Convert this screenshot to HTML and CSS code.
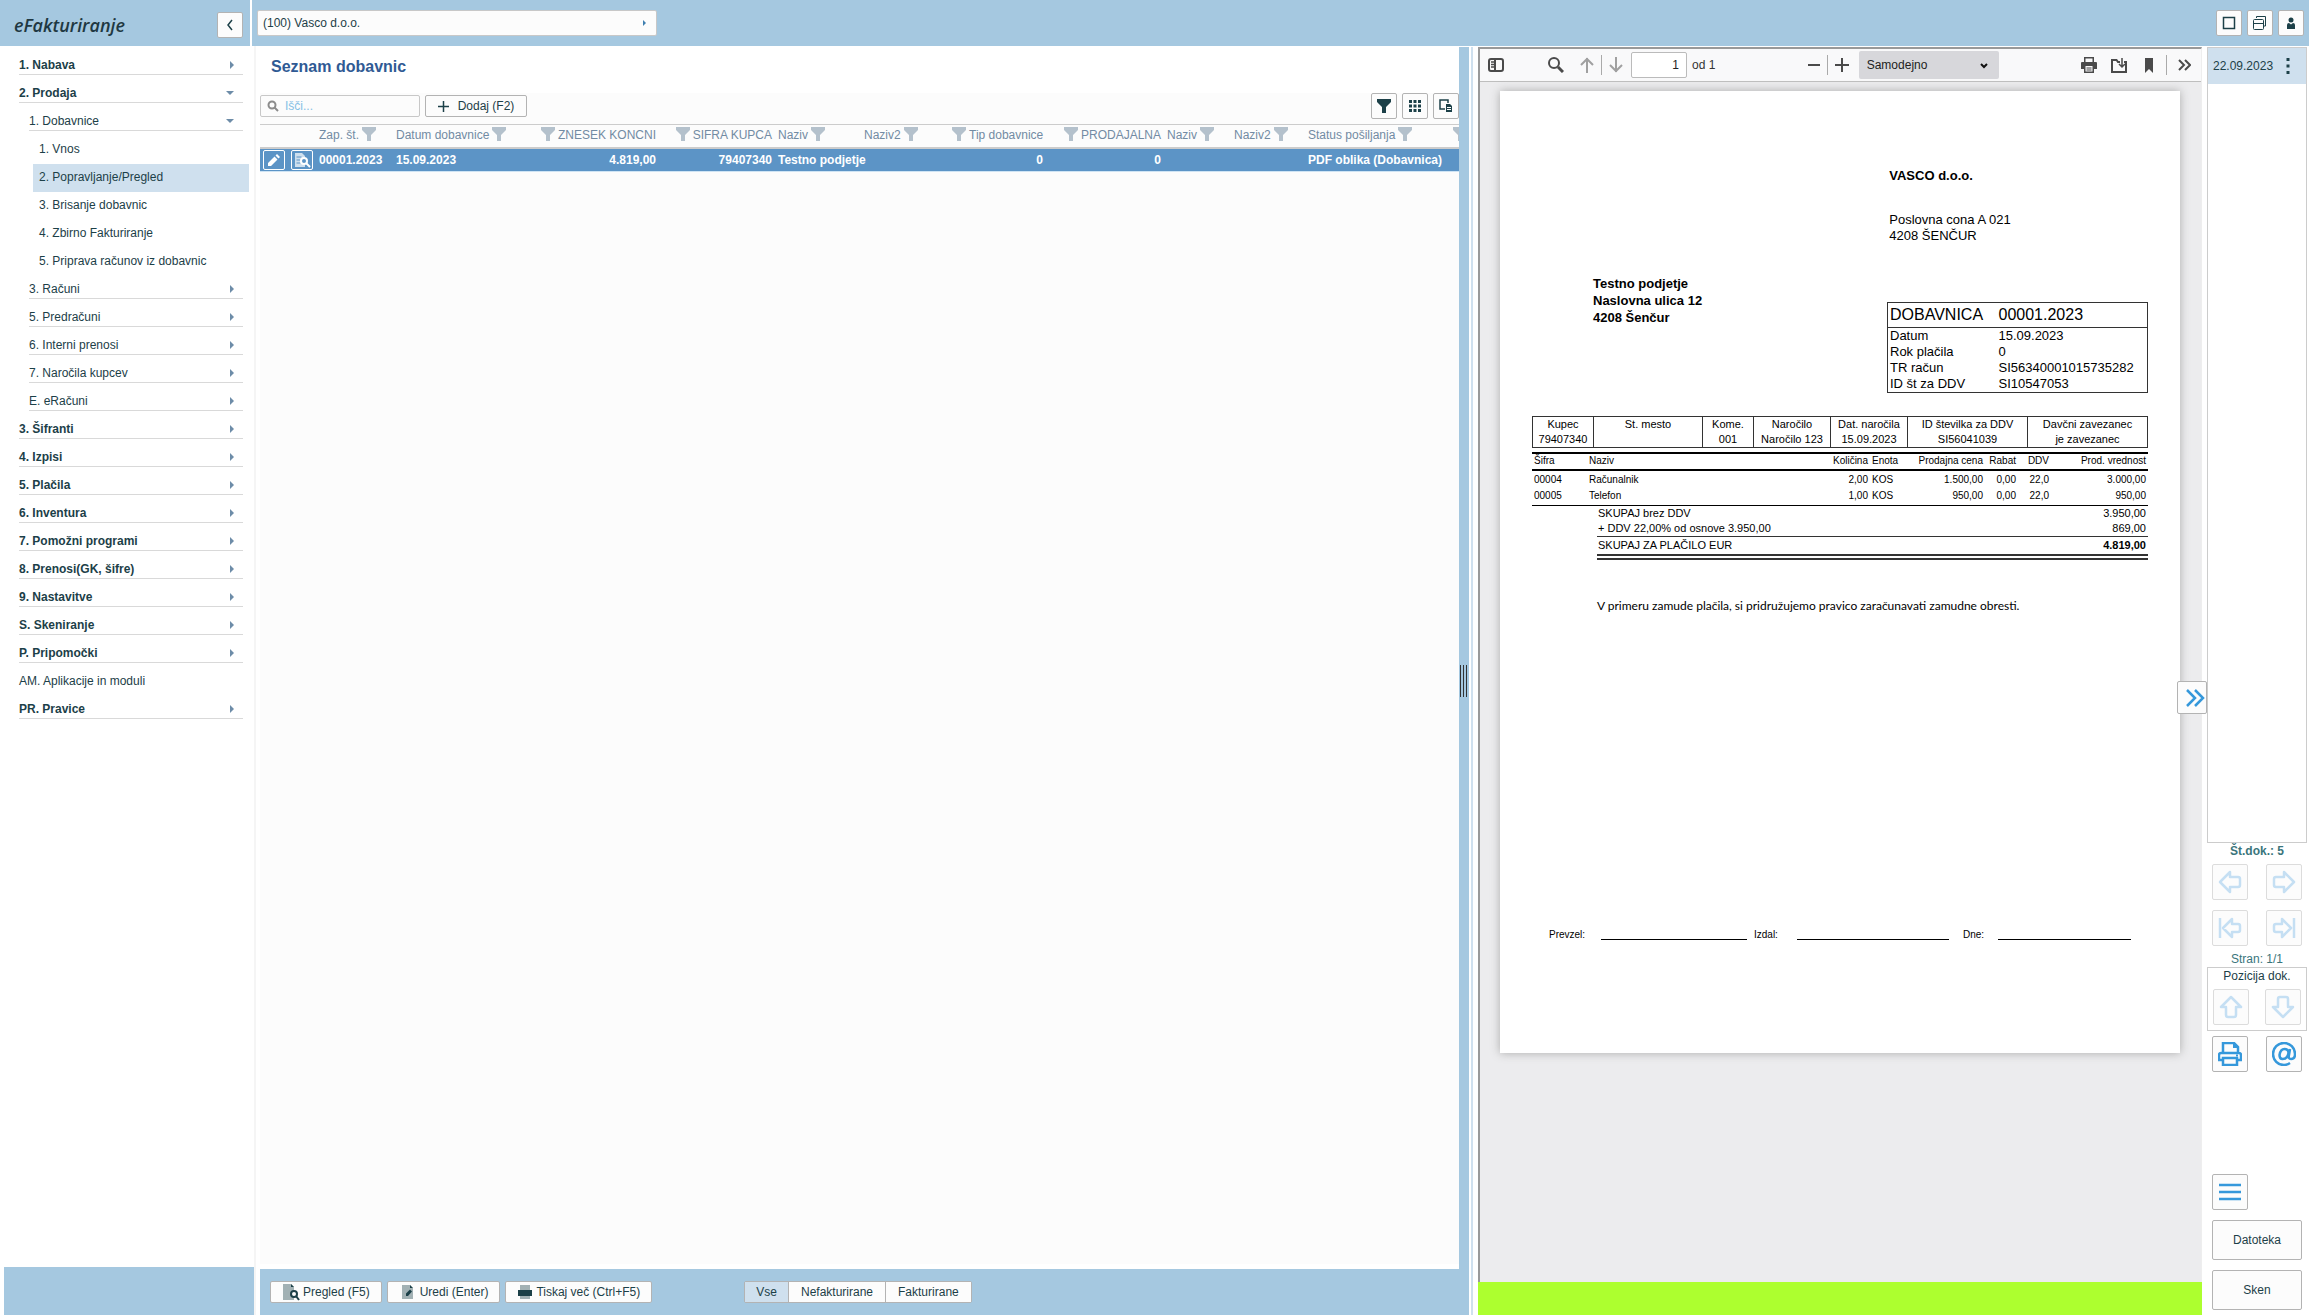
FILE: index.html
```html
<!DOCTYPE html>
<html lang="sl">
<head>
<meta charset="utf-8">
<title>eFakturiranje</title>
<link rel="stylesheet" href="styles.css">
</head>
<body>
<svg class="defs" aria-hidden="true">
  <symbol id="funnel" viewBox="0 0 14 14"><path d="M0 0h14v3L9 8v6H5V8L0 3z"/></symbol>
  <symbol id="tri" viewBox="0 0 4 8"><path d="M0 0l4 4-4 4z"/></symbol>
  <symbol id="tri-down" viewBox="0 0 8 4"><path d="M0 0h8l-4 4z"/></symbol>
  <symbol id="docsearch" viewBox="0 0 18 18"><path d="M1 1h8l3 3v13H1z" opacity=".4"/><path d="M9 1l3 3H9z"/><circle cx="12" cy="11" r="3" fill="#fcfcfc" stroke="currentColor" stroke-width="2"/><path d="M14 13l3 4" stroke="currentColor" stroke-width="2"/></symbol>
  <symbol id="arrow" viewBox="0 0 24 24"><path d="M2 12L12 2v5h8q2 0 2 2v6q0 2-2 2h-8v5z" fill="none" stroke="currentColor" stroke-width="2.500" stroke-linejoin="round"/></symbol>
  <symbol id="arrow-end" viewBox="0 0 24 24"><path d="M2 2v20M5 12l9-9v5h6q2 0 2 2v4q0 2-2 2h-6v5z" fill="none" stroke="currentColor" stroke-width="2.500" stroke-linejoin="round"/></symbol>
</svg>

<header class="top">
  <div class="brand">
    <h1>eFakturiranje</h1>
    <button class="btn sq" aria-label="Skrij meni"><svg width="8" height="12" viewBox="0 0 8 12"><path d="M6 1L2 6l4 5" class="line15"/></svg></button>
  </div>
  <div class="topbar">
    <div class="company">
      <select aria-label="Podjetje"><option>(100) Vasco d.o.o.</option></select>
      <svg class="tri" width="3" height="6"><use href="#tri"/></svg>
    </div>
    <div class="topicons">
      <button class="btn sq" aria-label="Okno"><svg width="14" height="14" viewBox="0 0 14 14"><rect x="1.500" y="1.500" width="11" height="11" class="line15"/></svg></button>
      <button class="btn sq" aria-label="Okna"><svg width="16" height="16" viewBox="0 0 16 16"><path d="M4.500 3V1.500h9V11H12M1.500 5.500q0-1 1-1h8q1 0 1 1v8q0 1-1 1h-8q-1 0-1-1zM1.500 8.500h10" class="thin"/></svg></button>
      <button class="btn sq" aria-label="Uporabnik"><svg width="10" height="12" viewBox="0 0 10 12"><circle cx="5" cy="3" r="2.500"/><path d="M1 12V8q0-2 2-2l2 1.500L7 6q2 0 2 2v4z"/></svg></button>
    </div>
  </div>
</header>

<div class="app">
  <aside class="side">
    <nav>
      <a href="#" class="l1"><span>1. Nabava</span><svg class="tri" width="4" height="8"><use href="#tri"/></svg></a>
      <a href="#" class="l1"><span>2. Prodaja</span><svg class="tri" width="8" height="4"><use href="#tri-down"/></svg></a>
      <a href="#" class="l2"><span>1. Dobavnice</span><svg class="tri" width="8" height="4"><use href="#tri-down"/></svg></a>
      <a href="#" class="l3"><span>1. Vnos</span></a>
      <a href="#" class="l3 on"><span>2. Popravljanje/Pregled</span></a>
      <a href="#" class="l3"><span>3. Brisanje dobavnic</span></a>
      <a href="#" class="l3"><span>4. Zbirno Fakturiranje</span></a>
      <a href="#" class="l3"><span>5. Priprava računov iz dobavnic</span></a>
      <a href="#" class="l2"><span>3. Računi</span><svg class="tri" width="4" height="8"><use href="#tri"/></svg></a>
      <a href="#" class="l2"><span>5. Predračuni</span><svg class="tri" width="4" height="8"><use href="#tri"/></svg></a>
      <a href="#" class="l2"><span>6. Interni prenosi</span><svg class="tri" width="4" height="8"><use href="#tri"/></svg></a>
      <a href="#" class="l2"><span>7. Naročila kupcev</span><svg class="tri" width="4" height="8"><use href="#tri"/></svg></a>
      <a href="#" class="l2"><span>E. eRačuni</span><svg class="tri" width="4" height="8"><use href="#tri"/></svg></a>
      <a href="#" class="l1"><span>3. Šifranti</span><svg class="tri" width="4" height="8"><use href="#tri"/></svg></a>
      <a href="#" class="l1"><span>4. Izpisi</span><svg class="tri" width="4" height="8"><use href="#tri"/></svg></a>
      <a href="#" class="l1"><span>5. Plačila</span><svg class="tri" width="4" height="8"><use href="#tri"/></svg></a>
      <a href="#" class="l1"><span>6. Inventura</span><svg class="tri" width="4" height="8"><use href="#tri"/></svg></a>
      <a href="#" class="l1"><span>7. Pomožni programi</span><svg class="tri" width="4" height="8"><use href="#tri"/></svg></a>
      <a href="#" class="l1"><span>8. Prenosi(GK, šifre)</span><svg class="tri" width="4" height="8"><use href="#tri"/></svg></a>
      <a href="#" class="l1"><span>9. Nastavitve</span><svg class="tri" width="4" height="8"><use href="#tri"/></svg></a>
      <a href="#" class="l1"><span>S. Skeniranje</span><svg class="tri" width="4" height="8"><use href="#tri"/></svg></a>
      <a href="#" class="l1"><span>P. Pripomočki</span><svg class="tri" width="4" height="8"><use href="#tri"/></svg></a>
      <a href="#" class="l1 plain"><span>AM. Aplikacije in moduli</span></a>
      <a href="#" class="l1"><span>PR. Pravice</span><svg class="tri" width="4" height="8"><use href="#tri"/></svg></a>
    </nav>
    <div class="sidefoot"></div>
  </aside>

  <main class="list">
    <h2>Seznam dobavnic</h2>
    <div class="grid">
      <div class="tools">
        <label class="search"><svg width="12" height="12" viewBox="0 0 12 12"><circle cx="5" cy="5" r="3.500"/><path d="M7.500 7.500L11 11"/></svg><input type="text" placeholder="Išči..." aria-label="Išči"></label>
        <button class="btn add"><svg width="11" height="11" viewBox="0 0 11 11"><path d="M5.500 0v11M0 5.500h11" class="line15"/></svg>Dodaj (F2)</button>
        <div class="toolicons">
          <button class="btn sq" aria-label="Filter"><svg width="14" height="14"><use href="#funnel"/></svg></button>
          <button class="btn sq" aria-label="Stolpci"><svg width="12" height="12" viewBox="0 0 12 12"><path d="M0 0h3v3H0zM4.500 0h3v3h-3zM9 0h3v3H9zM0 4.500h3v3H0zM4.500 4.500h3v3h-3zM9 4.500h3v3H9zM0 9h3v3H0zM4.500 9h3v3h-3zM9 9h3v3H9z"/></svg></button>
          <button class="btn sq" aria-label="Izvoz"><svg width="14" height="14" viewBox="0 0 14 14"><path d="M6 10H1V1h8v3" class="line15"/><path d="M7 5h4l2 2v6H7z"/><path d="M8 8.500h4M8 10.500h4" stroke="#fff"/></svg></button>
        </div>
      </div>
      <table class="data">
        <colgroup><col class="w56"><col class="w77"><col class="w144"><col class="w122"><col class="w116"><col class="w86"><col class="w88"><col class="w97"><col class="w118"><col class="w67"><col class="w74"><col class="w148"><col></colgroup>
        <thead><tr>
          <th></th>
          <th>Zap. št.<svg class="f"><use href="#funnel"/></svg></th>
          <th>Datum dobavnice<svg class="f"><use href="#funnel"/></svg></th>
          <th class="num"><svg class="f"><use href="#funnel"/></svg>ZNESEK KONCNI</th>
          <th class="num"><svg class="f"><use href="#funnel"/></svg>SIFRA KUPCA</th>
          <th>Naziv<svg class="f"><use href="#funnel"/></svg></th>
          <th>Naziv2<svg class="f"><use href="#funnel"/></svg></th>
          <th class="num"><svg class="f"><use href="#funnel"/></svg>Tip dobavnice</th>
          <th class="num"><svg class="f"><use href="#funnel"/></svg>PRODAJALNA</th>
          <th>Naziv<svg class="f"><use href="#funnel"/></svg></th>
          <th>Naziv2<svg class="f"><use href="#funnel"/></svg></th>
          <th>Status pošiljanja<svg class="f"><use href="#funnel"/></svg></th>
          <th class="last"><svg class="f"><use href="#funnel"/></svg></th>
        </tr></thead>
        <tbody><tr>
          <td><div class="rowbtns"><button aria-label="Uredi"><svg width="12" height="12" viewBox="0 0 12 12"><path d="M0 12V9l6.500-6.500 3 3L3 12zM7.500 1.500L9 0l3 3-1.500 1.500z"/></svg></button><button aria-label="Pregled"><svg width="18" height="18" viewBox="0 0 18 18"><path d="M2 2h7l3 3v11H2z" opacity=".7"/><path d="M3.500 6h5M3.500 9h4M3.500 12h4" stroke="#5c94c6"/><circle cx="11" cy="10" r="3" fill="#5c94c6" stroke="#fff" stroke-width="2"/><path d="M13 12l4 4" stroke="#fff" stroke-width="2"/></svg></button></div></td>
          <td>00001.2023</td><td>15.09.2023</td><td class="num">4.819,00</td><td class="num">79407340</td><td>Testno podjetje</td><td></td><td class="num">0</td><td class="num">0</td><td></td><td></td><td>PDF oblika (Dobavnica)</td><td></td>
        </tr></tbody>
      </table>
    </div>
    <footer class="actions">
      <button class="btn"><svg width="18" height="18"><use href="#docsearch"/></svg>Pregled (F5)</button>
      <button class="btn"><svg width="18" height="16" viewBox="0 0 18 16"><path d="M3 1h8l3 3v11H3z" opacity=".4"/><path d="M11 1l3 3h-3zM7 12V9.500l4-4 2 2-4 4.500z"/></svg>Uredi (Enter)</button>
      <button class="btn"><svg width="16" height="16" viewBox="0 0 16 16"><path d="M3 1h10v14H3z" opacity=".4"/><path d="M1 6h14v6H1z"/></svg>Tiskaj več (Ctrl+F5)</button>
      <div class="seg"><button class="on">Vse</button><button>Nefakturirane</button><button>Fakturirane</button></div>
    </footer>
  </main>

  <div class="split"><span class="grip"></span></div>

  <section class="pdf">
    <div class="viewer">
      <div class="pdfbar">
        <div class="grp g1">
          <button aria-label="Stranska vrstica"><svg width="16" height="14" viewBox="0 0 16 14"><rect x="1" y="1" width="14" height="12" rx="2" class="line2"/><path d="M7 1v12" class="line2"/><path d="M3 4h3M3 6.500h3M3 9h3" class="line15"/></svg></button>
          <button class="find" aria-label="Najdi"><svg width="16" height="16" viewBox="0 0 16 16"><circle cx="6" cy="6" r="5" class="line2"/><path d="M10 10l5 5" stroke="currentColor" stroke-width="3"/></svg></button>
          <button class="dim" aria-label="Prejšnja stran"><svg width="14" height="16" viewBox="0 0 14 16"><path d="M7 16V1M1 8l6-6 6 6" class="line2"/></svg></button>
          <i class="sep"></i>
          <button class="dim" aria-label="Naslednja stran"><svg width="14" height="16" viewBox="0 0 14 16"><path d="M7 0v15M1 8l6 6 6-6" class="line2"/></svg></button>
          <input class="pageno" type="text" value="1" aria-label="Stran"><span class="pages">od 1</span>
        </div>
        <div class="grp g2">
          <button aria-label="Pomanjšaj"><svg width="12" height="14" viewBox="0 0 12 14"><path d="M0 7h12" class="line2"/></svg></button>
          <i class="sep"></i>
          <button aria-label="Povečaj"><svg width="14" height="14" viewBox="0 0 14 14"><path d="M7 0v14M0 7h14" class="line2"/></svg></button>
          <div class="zoom"><select aria-label="Povečava"><option>Samodejno</option></select><svg width="8" height="6" viewBox="0 0 8 6"><path d="M1 1l3 3 3-3" class="line2"/></svg></div>
        </div>
        <div class="grp g3">
          <button aria-label="Natisni"><svg width="16" height="16" viewBox="0 0 16 16"><path d="M3 0h10v5h2q1 0 1 1v6h-3v4H3v-4H0V6q0-1 1-1h2zM4.500 1.500V5h7V1.500zM4.500 9v5.500h7V9zM5.500 10.500h5v1h-5zM5.500 12.500h5v1h-5z" fill-rule="evenodd"/></svg></button>
          <button aria-label="Prenesi"><svg width="16" height="15" viewBox="0 0 16 15"><path d="M9 4H7L5.500 2H1v12h14V4h-2" class="line2"/><path d="M11 0v9M8 6l3 3 3-3" class="line15"/></svg></button>
          <button aria-label="Zaznamek"><svg width="8" height="15" viewBox="0 0 8 15"><path d="M0 0h8v15L4 11l-4 4z"/></svg></button>
          <i class="sep"></i>
          <button aria-label="Orodja"><svg width="13" height="12" viewBox="0 0 13 12"><path d="M1 1l5 5-5 5M7 1l5 5-5 5" class="line2"/></svg></button>
        </div>
      </div>
      <div class="canvas">
        <article class="page">
          <div class="sender"><b>VASCO d.o.o.</b><p>Poslovna cona A 021<br>4208 ŠENČUR</p></div>
          <div class="mid">
            <address>Testno podjetje<br>Naslovna ulica 12<br>4208 Šenčur</address>
            <table class="docbox">
              <tr class="head"><td>DOBAVNICA</td><td>00001.2023</td></tr>
              <tr><td>Datum</td><td>15.09.2023</td></tr>
              <tr><td>Rok plačila</td><td>0</td></tr>
              <tr><td>TR račun</td><td>SI56340001015735282</td></tr>
              <tr><td>ID št za DDV</td><td>SI10547053</td></tr>
            </table>
          </div>
          <table class="buyer">
            <colgroup><col class="w61"><col><col class="w51"><col class="w77"><col class="w77"><col class="w120"><col class="w120"></colgroup>
            <tr><td>Kupec</td><td>St. mesto</td><td>Kome.</td><td>Naročilo</td><td>Dat. naročila</td><td>ID številka za DDV</td><td>Davčni zavezanec</td></tr>
            <tr><td>79407340</td><td></td><td>001</td><td>Naročilo 123</td><td>15.09.2023</td><td>SI56041039</td><td>je zavezanec</td></tr>
          </table>
          <table class="items">
            <colgroup><col class="w55"><col><col class="w61"><col class="w41"><col class="w74"><col class="w33"><col class="w33"><col class="w97"></colgroup>
            <thead><tr><th>Šifra</th><th>Naziv</th><th class="r">Količina</th><th>Enota</th><th class="r">Prodajna cena</th><th class="r">Rabat</th><th class="r">DDV</th><th class="r">Prod. vrednost</th></tr></thead>
            <tbody>
              <tr><td>00004</td><td>Računalnik</td><td class="r">2,00</td><td>KOS</td><td class="r">1.500,00</td><td class="r">0,00</td><td class="r">22,0</td><td class="r">3.000,00</td></tr>
              <tr><td>00005</td><td>Telefon</td><td class="r">1,00</td><td>KOS</td><td class="r">950,00</td><td class="r">0,00</td><td class="r">22,0</td><td class="r">950,00</td></tr>
            </tbody>
          </table>
          <dl class="totals">
            <div><dt>SKUPAJ brez DDV</dt><dd>3.950,00</dd></div>
            <div><dt>+ DDV 22,00% od osnove 3.950,00</dt><dd>869,00</dd></div>
            <div class="sum"><dt>SKUPAJ ZA PLAČILO EUR</dt><dd>4.819,00</dd></div>
          </dl>
          <p class="note">V primeru zamude plačila, si pridružujemo pravico zaračunavati zamudne obresti.</p>
          <div class="sign"><span>Prevzel:</span><i></i><span>Izdal:</span><i></i><span>Dne:</span><i></i></div>
        </article>
      </div>
    </div>
    <div class="status"></div>
    <button class="btn expand" aria-label="Razširi"><svg width="20" height="20" viewBox="0 0 20 20"><path d="M2 2l8 8-8 8M10 2l8 8-8 8" class="line25"/></svg></button>
  </section>

  <aside class="docs">
    <div class="doclist">
      <div class="docitem"><span>22.09.2023</span><button aria-label="Več"><svg width="4" height="16" viewBox="0 0 4 16"><path d="M.500 0h3v3h-3zM.500 6.500h3v3h-3zM.500 13h3v3h-3z"/></svg></button></div>
    </div>
    <div class="count">Št.dok.: 5</div>
    <div class="pair">
      <button class="btn big off" aria-label="Prejšnji"><svg width="24" height="24"><use href="#arrow"/></svg></button>
      <button class="btn big off flip" aria-label="Naslednji"><svg width="24" height="24"><use href="#arrow"/></svg></button>
      <button class="btn big off" aria-label="Prvi"><svg width="24" height="24"><use href="#arrow-end"/></svg></button>
      <button class="btn big off flip" aria-label="Zadnji"><svg width="24" height="24"><use href="#arrow-end"/></svg></button>
    </div>
    <div class="pageinfo">Stran: 1/1</div>
    <fieldset class="pos"><div>Pozicija dok.</div>
      <div class="posbtns">
        <button class="btn big off up" aria-label="Gor"><svg width="24" height="24"><use href="#arrow"/></svg></button>
        <button class="btn big off down" aria-label="Dol"><svg width="24" height="24"><use href="#arrow"/></svg></button>
      </div>
    </fieldset>
    <div class="pair send">
      <button class="btn big" aria-label="Natisni"><svg width="24" height="24" viewBox="0 0 24 24"><path d="M5 10V1h11l4 4v5M5 18H1v-5q0-2 2-2h18q2 0 2 2v5h-4M5 16h14v7H5z" class="line25"/><path d="M15 1v5h5M18 12.500h2v2h-2z"/></svg></button>
      <button class="btn big" aria-label="E-pošta"><svg width="24" height="24" viewBox="0 0 24 24"><path d="M18 21q-3 2-6 2A11 11 0 1 1 23 12q0 5-4 5-3 0-2-4l1-6M16.500 11q0-4-4-4t-5 6q0 4 3 4 5 0 6-6z" class="line25"/></svg></button>
    </div>
    <button class="btn big menu" aria-label="Meni"><svg width="22" height="18" viewBox="0 0 22 18"><path d="M0 2h22M0 9h22M0 16h22" class="line25"/></svg></button>
    <button class="btn wide">Datoteka</button>
    <button class="btn wide">Sken</button>
  </aside>
</div>
</body>
</html>
```
FILE: styles.css
```css
* { box-sizing: border-box; }
body {
  margin: 0;
  min-height: 100vh;
  display: flex;
  flex-direction: column;
  font: 12px/14px "Liberation Sans", Arial, sans-serif;
  color: #1c4048;
  background: #fff;
}
button, input, select { font: inherit; color: inherit; margin: 0; }
button { padding: 0; border: 0; background: none; }
svg { display: block; fill: currentColor; flex: none; }
h1, h2, p, dl, dd { margin: 0; }
table { border-collapse: collapse; }
th { font-weight: normal; text-align: left; }
td, th { padding: 0; }
.defs { position: absolute; width: 0; height: 0; }
.thin { fill: none; stroke: currentColor; stroke-width: 1; }
.line15 { fill: none; stroke: currentColor; stroke-width: 1.5; }
.line2 { fill: none; stroke: currentColor; stroke-width: 2; }
.line25 { fill: none; stroke: currentColor; stroke-width: 2.5; }
.tri { color: #6d8ca8; }
.btn {
  display: flex;
  align-items: center;
  justify-content: center;
  background: #fcfcfc;
  border: 1px solid #b3b3b3;
  border-radius: 2px;
}
.sq { width: 26px; height: 26px; }

.top { display: flex; gap: 2px; height: 46px; }
.brand {
  width: 250px;
  display: flex;
  align-items: center;
  justify-content: space-between;
  padding: 4px 7px 0 14px;
  background: #a5c8e0;
}
.brand h1 { font: italic 600 18px/24px "Open Sans", sans-serif; color: #1f3842; }
.topbar {
  flex: 1;
  display: flex;
  justify-content: space-between;
  padding: 10px 5px 0;
  background: #a5c8e0;
}
.company { position: relative; width: 400px; height: 26px; }
.company select {
  appearance: none;
  width: 100%;
  height: 26px;
  padding: 0 5px;
  background: #fcfcfc;
  border: 1px solid #c8c8c8;
  border-radius: 2px;
}
.company .tri { position: absolute; right: 11px; top: 10px; color: #3f7fb0; }
.topicons { display: flex; gap: 5px; }

.app {
  flex: 1;
  display: grid;
  grid-template-columns: 260px minmax(0, 1199fr) 19px minmax(0, 724fr) 107px;
}

.side { display: flex; flex-direction: column; margin-right: 4px; border-right: 2px solid #f5f5f5; }
.side nav { flex: 1; padding-top: 6px; }
.side a {
  display: flex;
  align-items: center;
  justify-content: space-between;
  height: 23px;
  margin: 0 11px 5px 29px;
  padding: 4px 9px 0 0;
  border-bottom: 1px solid #d9d9d9;
  color: inherit;
  text-decoration: none;
}
.side a.l1 { margin-left: 19px; font-weight: bold; }
.side a.plain { font-weight: normal; border-color: transparent; }
.side a.l3 { height: 28px; margin: 0 5px 0 33px; padding: 0 6px 2px; border: 0; }
.side a.on { background: #cfe0ee; }
.sidefoot { height: 48px; margin-left: 4px; background: #a5c8e0; }

.list { display: flex; flex-direction: column; }
.list h2 { height: 47px; padding: 11px 11px 0; font-size: 16px; line-height: 20px; color: #2f5a94; }
.grid { flex: 1; background: #fcfcfc; margin-bottom: 5px; overflow: hidden; }
.tools { display: flex; align-items: center; height: 31px; padding-bottom: 5px; }
.search { display: flex; align-items: center; gap: 6px; width: 160px; height: 22px; padding: 0 6px; border: 1px solid #c8c8c8; border-radius: 2px; }
.search svg { fill: none; stroke: #8c8c8c; stroke-width: 2; }
.search input { width: 120px; height: 18px; padding: 0; border: 0; background: none; outline: 0; }
.search input::placeholder { color: #85c1e6; opacity: 1; }
.add { gap: 9px; width: 102px; height: 22px; margin-left: 5px; }
.toolicons { display: flex; gap: 5px; margin-left: auto; }

.data { width: 100%; table-layout: fixed; }
.data th { height: 23px; padding: 0 3px 2px; border-top: 1px solid #ccc; border-bottom: 2px solid #ccc; color: #728ba3; white-space: nowrap; line-height: 16px; }
.data td { height: 24px; padding: 0 3px; font-weight: bold; white-space: nowrap; color: #fff; }
.data tbody tr { background: #5c94c6; border-bottom: 1px solid #cfe4f4; }
.data .num { text-align: right; }
.data .last { padding-left: 0; overflow: hidden; }
.f { display: inline-block; width: 14px; height: 14px; margin-left: 3px; vertical-align: -2px; color: #b4c1cc; }
.num .f, .last .f { margin: 0 3px 0 0; }
.rowbtns { display: flex; gap: 6px; }
.rowbtns button { display: flex; align-items: center; justify-content: center; width: 22px; height: 20px; border: 1px solid #fff; border-radius: 2px; }
.w33 { width: 33px; }
.w41 { width: 41px; }
.w51 { width: 51px; }
.w55 { width: 55px; }
.w56 { width: 56px; }
.w61 { width: 61px; }
.w67 { width: 67px; }
.w74 { width: 74px; }
.w77 { width: 77px; }
.w86 { width: 86px; }
.w88 { width: 88px; }
.w97 { width: 97px; }
.w116 { width: 116px; }
.w118 { width: 118px; }
.w120 { width: 120px; }
.w122 { width: 122px; }
.w144 { width: 144px; }
.w148 { width: 148px; }

.actions { display: flex; align-items: center; gap: 5px; height: 46px; padding: 0 10px; background: #a5c8e0; }
.actions .btn { gap: 3px; height: 22px; padding: 0 11px; }
.seg { display: flex; margin-left: 87px; border: 1px solid #b3b3b3; border-radius: 2px; }
.seg button { height: 20px; padding: 0 12px; background: #fcfcfc; border-left: 1px solid #b3b3b3; }
.seg button:first-child { padding: 0 11px; border-left: 0; }
.seg .on { background: #cfe0ee; }

.split { display: flex; align-items: center; margin: 1px 5px 0 0; padding-left: 1px; background: linear-gradient(90deg, #a5c8e0 10px, #fff 10px, #fff 12px, #cfe0ee 12px); }
.grip { width: 7px; height: 32px; background: repeating-linear-gradient(90deg, #333 0, #333 1px, transparent 1px, transparent 3px); }

.pdf { position: relative; display: flex; flex-direction: column; padding-top: 1px; }
.viewer { flex: 1; display: flex; flex-direction: column; border: 2px solid #999; border-width: 2px 1px 0 2px; border-right-color: #eee; background: #ececee; }
.pdfbar { display: flex; align-items: center; height: 33px; background: #f9f9fa; border-bottom: 1px solid #bebebe; color: #4a4a4a; }
.grp { display: flex; align-items: center; }
.g1 { flex: 324; padding-left: 8px; }
.find { margin: 0 16px 0 44px; }
.dim { color: #a0a0a0; }
.sep { width: 1px; height: 20px; margin: 0 7px; background: #aaa; }
.pageno { width: 56px; height: 26px; margin: 0 5px 0 8px; padding: 0 7px; text-align: right; background: #fff; border: 1px solid #bbb; border-radius: 2px; color: #222; }
.pages { color: #333; }
.g2 { flex: 277; }
.zoom { position: relative; margin-left: 10px; }
.zoom select { appearance: none; width: 140px; height: 28px; padding: 0 8px; border: 0; border-radius: 2px; background: #d7d7db; color: #222; }
.zoom svg { position: absolute; right: 11px; top: 12px; color: #111; }
.g3 { padding-right: 10px; }
.g3 button + button { margin-left: 14px; }
.g3 button:nth-child(3) { margin-left: 18px; }
.g3 .sep { margin: 0 11px 0 13px; }
.canvas { padding: 9px 21px 9px 20px; }
.page {
  display: flex;
  flex-direction: column;
  aspect-ratio: 680 / 962;
  padding: 77px 32px 0;
  background: #fff;
  box-shadow: 0 0 9px #aaa;
  color: #000;
  font-size: 13px;
  line-height: 16px;
}
.sender { padding-left: 58%; }
.sender p { margin-top: 28px; }
.mid { display: grid; grid-template-columns: 355fr 261fr; margin-top: 31px; }
.mid address { padding-left: 61px; font: bold 13px/17px "Liberation Sans", Arial, sans-serif; }
.docbox { width: 100%; height: 90px; margin-top: 27px; border: 1px solid #333; }
.docbox td { padding-left: 2px; }
.docbox td:first-child { width: 109px; }
.docbox .head { height: 25px; border-bottom: 1px solid #333; font-size: 16px; }
.buyer { width: 100%; margin-top: 23px; table-layout: fixed; border: 1px solid #333; font-size: 11px; line-height: 15px; text-align: center; white-space: nowrap; }
.buyer td { border-left: 1px solid #333; }
.items { width: 100%; margin-top: 4px; table-layout: fixed; font-size: 10px; line-height: 14px; border-bottom: 1px solid #000; white-space: nowrap; }
.items th { height: 17px; padding: 0 2px 1px; border-top: 2px solid #000; border-bottom: 2px solid #000; }
.items td { height: 17px; padding: 0 2px; }
.items tbody tr:first-child td { height: 18px; padding-top: 1px; }
.r { text-align: right; }
.totals { margin-left: 65px; font-size: 11px; line-height: 15px; }
.totals div { display: flex; justify-content: space-between; padding: 0 2px 0 1px; }
.totals .sum { padding-bottom: 1px; line-height: 16px; border-top: 1px solid #333; border-bottom: 6px double #333; font-weight: bold; }
.totals .sum dt { font-weight: normal; }
.note { margin: 37px 0 0 65px; font: 12px/18px Lato, sans-serif; }
.sign { display: grid; grid-template-columns: 52px 146fr 50px 152fr 49px 133fr; align-items: end; margin: 312px 17px 0; font-size: 10px; line-height: 16px; }
.sign i { border-bottom: 1px solid #000; margin-bottom: 4px; }
.sign span { padding-bottom: 1px; }
.sign span:nth-child(n+2) { padding-left: 7px; }
.sign span:nth-child(n+5) { padding-left: 14px; }
.status { height: 33px; background: #adff2f; }
.expand { position: absolute; right: -5px; top: 635px; width: 30px; height: 33px; padding-left: 5px; color: #3598db; }

.docs { display: flex; flex-direction: column; padding: 1px 2px 5px 5px; }
.doclist { flex: 1; border: 1px solid #ccc; }
.docitem { display: flex; align-items: center; justify-content: space-between; height: 36px; padding: 0 16px 0 5px; background: #cfe0ee; }
.count { padding-top: 1px; font-weight: bold; text-align: center; color: #3a757c; }
.pair { display: grid; grid-template-columns: 36px 36px; gap: 10px 18px; padding: 6px 5px; }
.big { width: 36px; height: 36px; color: #3598db; }
.off { color: #c5dff3; border-color: #dcdcdc; }
.flip svg { transform: rotate(180deg); }
.up svg { transform: rotate(90deg); }
.down svg { transform: rotate(270deg); }
.pageinfo { text-align: center; color: #3a757c; line-height: 15px; }
.pos { min-width: 0; margin: 0; height: 64px; padding: 1px 5px; border: 1px solid #ccc; text-align: center; }
.posbtns { display: flex; justify-content: space-between; padding-top: 6px; }
.send { padding: 5px 5px 0; }
.menu { margin: 102px 5px 10px; }
.wide { height: 40px; margin: 0 5px; }
.wide + .wide { margin-top: 10px; }
```
